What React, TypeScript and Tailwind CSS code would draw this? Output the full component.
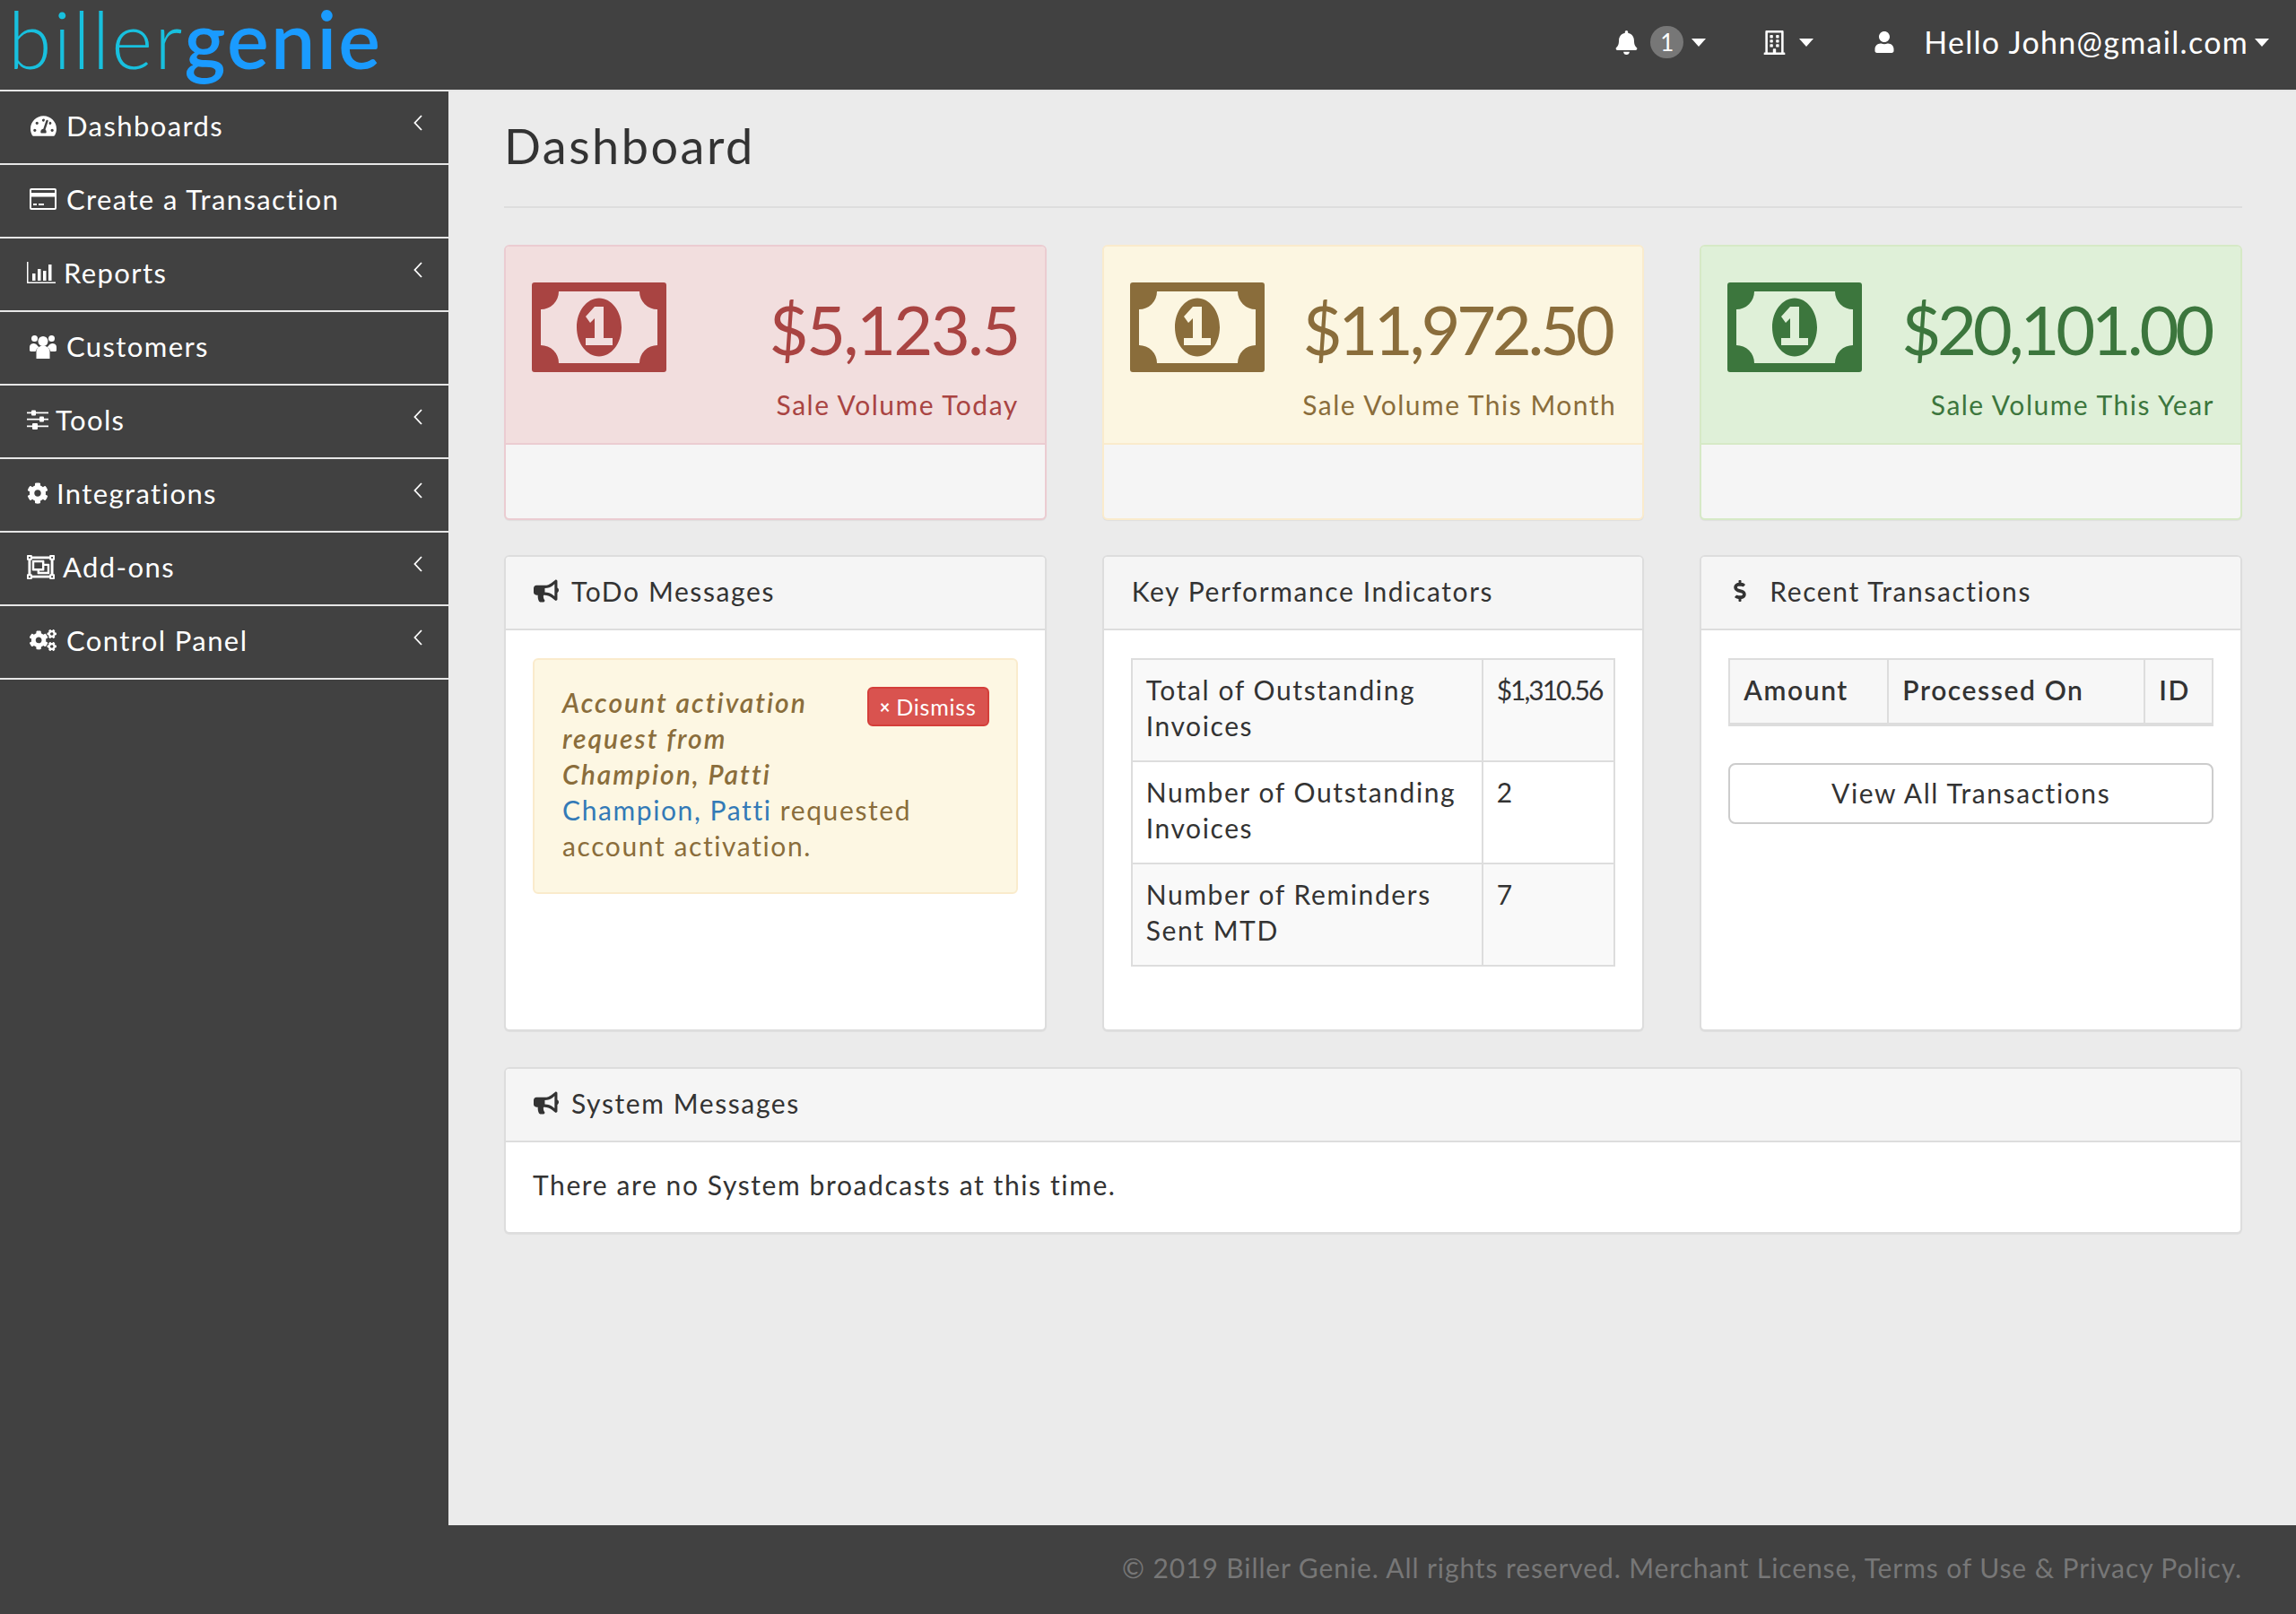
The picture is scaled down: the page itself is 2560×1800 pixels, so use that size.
import { FaBell, FaBullhorn, FaCog, FaCogs, FaDollarSign, FaRegBuilding, FaRegObjectGroup, FaTachometerAlt, FaUser } from "react-icons/fa";
import type { ReactNode } from "react";

function Chevron() {
  return (
    <svg width="10" height="18" viewBox="0 0 10 18" className="absolute right-[29px] top-[26px]">
      <polyline points="9,1 1.5,9 9,17" fill="none" stroke="#fff" strokeWidth="1.8" />
    </svg>
  );
}

function Caret() {
  return <span className="inline-block h-0 w-0 border-x-[8px] border-t-[9px] border-x-transparent border-t-white" />;
}

function CardIcon() {
  return (
    <svg width="30" height="24" viewBox="0 0 30 24" fill="#fff">
      <path fillRule="evenodd" d="M2 0h26a2 2 0 0 1 2 2v20a2 2 0 0 1-2 2H2a2 2 0 0 1-2-2V2a2 2 0 0 1 2-2zM2 2v3h26V2zM2 9.500v12.500h26V9.500zM4 17h4v2H4zM10 17h6v2h-6z" />
    </svg>
  );
}

function ChartIcon() {
  return (
    <svg width="32" height="24" viewBox="0 0 32 24" fill="#fff">
      <path d="M0 0h1.500v22.500H32V24H0zM6 13h3.500v8H6zM12 8h3.500v13H12zM18 10h3.500v11H18zM24 3h3.500v18H24z" />
    </svg>
  );
}

function UsersIcon() {
  return (
    <svg width="30" height="27" viewBox="0 0 30 27" fill="#fff">
      <circle cx="15" cy="7.500" r="5.500" />
      <circle cx="5.500" cy="4.500" r="3.500" />
      <circle cx="24.500" cy="4.500" r="3.500" />
      <path d="M7.500 27V19a7.500 6.500 0 0 1 15 0V27z" />
      <path d="M0 18v-4a4.500 4 0 0 1 8-2.500a9 9 0 0 0 2.500 2.500a8 8 0 0 0-4 5H2a2 2 0 0 1-2-1z" />
      <path d="M30 18v-4a4.500 4 0 0 0-8-2.500a9 9 0 0 1-2.500 2.500a8 8 0 0 1 4 5H28a2 2 0 0 0 2-1z" />
    </svg>
  );
}

function SlidersIcon() {
  return (
    <svg width="24" height="22" viewBox="0 0 24 22" fill="#fff">
      <path d="M0 2.500h24v1.800H0zM0 9.800h24v1.800H0zM0 17.500h24v1.800H0z" />
      <rect x="5" y="0.500" width="5" height="6" rx="1" />
      <rect x="14" y="7.500" width="5" height="6" rx="1" />
      <rect x="6" y="15" width="6" height="7" rx="1" />
    </svg>
  );
}

function MoneyIcon({ className }: { className: string }) {
  return (
    <svg width="150" height="100" viewBox="0 0 150 100" className={className} fill="currentColor">
      <path
        fillRule="evenodd"
        d="M3 0H147a3 3 0 0 1 3 3V97a3 3 0 0 1-3 3H3a3 3 0 0 1-3-3V3a3 3 0 0 1 3-3zM30 10H120A20 20 0 0 0 140 30V70A20 20 0 0 0 120 90H30A20 20 0 0 0 10 70V30A20 20 0 0 0 30 10Z"
      />
      <path
        fillRule="evenodd"
        d="M75 17.500C88.800 17.500 100 32 100 50S88.800 82.500 75 82.500 50 68 50 50 61.200 17.500 75 17.500zM70 27H80V62H90V70H60V62H70V40L65 45 60 38Z"
      />
    </svg>
  );
}

const navItems: { label: string; icon: ReactNode; box: string; chevron: boolean }[] = [
  { label: "Dashboards", icon: <FaTachometerAlt size={29} />, box: "ml-[34px] w-[40px]", chevron: true },
  { label: "Create a Transaction", icon: <CardIcon />, box: "ml-[33px] w-[41px]", chevron: false },
  { label: "Reports", icon: <ChartIcon />, box: "ml-[30px] w-[41px]", chevron: true },
  { label: "Customers", icon: <UsersIcon />, box: "ml-[33px] w-[41px]", chevron: false },
  { label: "Tools", icon: <SlidersIcon />, box: "ml-[30px] w-[32px]", chevron: true },
  { label: "Integrations", icon: <FaCog size={24} />, box: "ml-[30px] w-[33px]", chevron: true },
  { label: "Add-ons", icon: <FaRegObjectGroup size={31} />, box: "ml-[30px] w-[40px]", chevron: true },
  { label: "Control Panel", icon: <FaCogs size={30} />, box: "ml-[33px] w-[41px]", chevron: true },
];

function Sidebar() {
  return (
    <aside className="w-[500px] shrink-0 bg-[#414141] text-white">
      {navItems.map((item) => (
        <div key={item.label} className="relative flex h-[82px] items-center border-b-2 border-[#e6e6e6] pb-[4px]">
          <span className={`flex items-center ${item.box}`}>{item.icon}</span>
          <span className="text-[31px] leading-[40px] tracking-[1.4px]">{item.label}</span>
          {item.chevron && <Chevron />}
        </div>
      ))}
    </aside>
  );
}

function StatCard({
  amount,
  label,
  border,
  body,
  text,
  spacing,
}: {
  amount: string;
  label: string;
  border: string;
  body: string;
  text: string;
  spacing: string;
}) {
  return (
    <div className={`h-[307px] overflow-hidden rounded-[6px] border-2 bg-[#f5f5f5] shadow-[0_1px_1px_rgba(0,0,0,0.05)] ${border}`}>
      <div className={`relative h-[221px] border-b-2 pl-[29px] pr-[29px] ${border} ${body} ${text}`}>
        <MoneyIcon className="absolute left-[29px] top-[40px]" />
        <div className={`pt-[48px] text-right text-[76px] leading-[88px] ${spacing}`}>{amount}</div>
        <div className="mt-[20px] text-right text-[30px] leading-[40px] tracking-[1.500px]">{label}</div>
      </div>
    </div>
  );
}

function PanelHeader({ icon, title }: { icon?: ReactNode; title: string }) {
  return (
    <div className="flex h-[82px] items-center border-b-2 border-[#ddd] bg-[#f5f5f5] pb-[4px] pl-[31px] text-[#333]">
      {icon}
      <span>{title}</span>
    </div>
  );
}

function Panel({ children, className }: { children: ReactNode; className: string }) {
  return (
    <div className={`overflow-hidden rounded-[6px] border-2 border-[#ddd] bg-white shadow-[0_1px_1px_rgba(0,0,0,0.05)] ${className}`}>{children}</div>
  );
}

const kpis = [
  ["Total of Outstanding Invoices", "$1,310.56"],
  ["Number of Outstanding Invoices", "2"],
  ["Number of Reminders Sent MTD", "7"],
];

export default function App() {
  return (
    <div className="flex h-[1800px] flex-col bg-[#ebebeb] font-['Lato',sans-serif] text-[30px] leading-[40px] tracking-[1.6px] text-[#333]">
      <header className="flex h-[102px] shrink-0 items-center border-b-2 border-[#e6e6e6] bg-[#414141] text-white">
        <div className="ml-[9px] mt-[-14px] text-[88px] leading-[80px] tracking-[2.100px]">
          <span className="font-light text-[#18c0de]">biller</span>
          <span className="font-semibold text-[#1a9bff]">genie</span>
        </div>
        <div className="ml-auto flex items-center pr-[30px] pb-[6px]">
          <FaBell size={27} />
          <span className="ml-[13px] flex h-[36px] w-[37px] items-center justify-center rounded-full bg-[#777] text-[26px] leading-none tracking-normal">1</span>
          <span className="ml-[9px] flex"><Caret /></span>
          <FaRegBuilding size={27} className="ml-[63px]" />
          <span className="ml-[14px] flex"><Caret /></span>
          <FaUser size={24} className="ml-[67px]" />
          <span className="ml-[32px] text-[34px] leading-[40px] tracking-[1.3px]">Hello John@gmail.com</span>
          <span className="ml-[7px] flex"><Caret /></span>
        </div>
      </header>

      <div className="flex min-h-0 flex-1">
        <Sidebar />
        <main className="flex-1 pl-[62px] pr-[60px]">
          <div className="h-[130px] border-b-2 border-[#ddd] pt-[36px]">
            <h1 className="text-[54px] leading-[50px] tracking-[2.5px]">Dashboard</h1>
          </div>

          <div className="mt-[41px] grid grid-cols-3 gap-x-[62px]">
            <StatCard amount="$5,123.5" label="Sale Volume Today" border="border-[#ebccd1]" body="bg-[#f2dede]" text="text-[#a94442]" spacing="tracking-[-2.700px]" />
            <StatCard amount="$11,972.50" label="Sale Volume This Month" border="border-[#faebcc]" body="bg-[#fcf6e1]" text="text-[#8a6d3b]" spacing="pr-[6px] tracking-[-4.400px]" />
            <StatCard amount="$20,101.00" label="Sale Volume This Year" border="border-[#d6e9c6]" body="bg-[#dff0d8]" text="text-[#3c763d]" spacing="pr-[4px] tracking-[-4.300px]" />
          </div>

          <div className="mt-[39px] grid grid-cols-3 gap-x-[62px]">
            <Panel className="h-[531px]">
              <PanelHeader icon={<FaBullhorn size={28} className="mr-[14px] text-[#333]" />} title="ToDo Messages" />
              <div className="px-[30px] pt-[31px]">
                <div className="relative h-[263px] rounded-[6px] border-2 border-[#faebcc] bg-[#fdf7e3] px-[31px] pt-[27px] text-[#8a6d3b]">
                  <button className="absolute right-[30px] top-[30px] flex h-[44px] w-[136px] items-center justify-center rounded-[6px] border-2 border-[#d43f3a] bg-[#d9534f] text-[25px] leading-none tracking-[0.8px] text-white">
                    <span className="mr-[6px] text-[20px] font-bold">×</span>Dismiss
                  </button>
                  <div className="w-[310px] font-semibold italic tracking-[2px]">Account activation request from Champion, Patti</div>
                  <div>
                    <span className="text-[#337ab7]">Champion, Patti</span> requested account activation.
                  </div>
                </div>
              </div>
            </Panel>

            <Panel className="h-[531px]">
              <PanelHeader title="Key Performance Indicators" />
              <div className="px-[30px] pt-[31px]">
                <table className="w-full table-fixed border-collapse border-2 border-[#ddd]">
                  <tbody>
                    {kpis.map(([name, value], i) => (
                      <tr key={name} className={i % 2 === 0 ? "bg-[#f9f9f9]" : "bg-white"}>
                        <td className="w-[391px] border-2 border-[#ddd] px-[15px] pb-[19px] pt-[13px] align-top">{name}</td>
                        <td className="border-2 border-[#ddd] px-[15px] pb-[19px] pt-[13px] align-top tracking-[-2px]">{value}</td>
                      </tr>
                    ))}
                  </tbody>
                </table>
              </div>
            </Panel>

            <Panel className="h-[531px]">
              <PanelHeader icon={<FaDollarSign size={24} className="mr-[21px] text-[#333]" />} title="Recent Transactions" />
              <div className="px-[30px] pt-[31px]">
                <table className="w-full table-fixed border-collapse border-2 border-[#ddd]">
                  <thead>
                    <tr className="bg-[#f7f7f7]">
                      <th className="w-[177px] border-2 border-b-4 border-[#ddd] px-[15px] pb-[17px] pt-[13px] text-left font-semibold">Amount</th>
                      <th className="w-[286px] border-2 border-b-4 border-[#ddd] px-[15px] pb-[17px] pt-[13px] text-left font-semibold">Processed On</th>
                      <th className="border-2 border-b-4 border-[#ddd] px-[15px] pb-[17px] pt-[13px] text-left font-semibold">ID</th>
                    </tr>
                  </thead>
                </table>
                <button className="mt-[41px] h-[68px] w-full rounded-[8px] border-2 border-[#ccc] bg-white pb-[3px] text-[#333]">View All Transactions</button>
              </div>
            </Panel>
          </div>

          <Panel className="mt-[40px] h-[186px]">
            <PanelHeader icon={<FaBullhorn size={28} className="mr-[14px] text-[#333]" />} title="System Messages" />
            <div className="px-[30px] pt-[27px]">There are no System broadcasts at this time.</div>
          </Panel>
        </main>
      </div>

      <footer className="flex h-[99px] shrink-0 items-center justify-end bg-[#414141] pb-[6px] pr-[60px] tracking-[0.9px] text-[#777]">
        © 2019 Biller Genie. All rights reserved. Merchant License, Terms of Use &amp; Privacy Policy.
      </footer>
    </div>
  );
}
